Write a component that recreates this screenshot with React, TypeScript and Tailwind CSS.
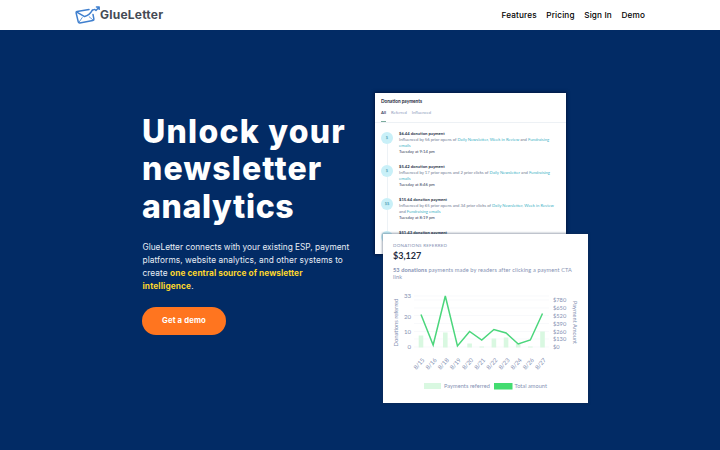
import React from "react";

const Logo = () => (
  <div className="flex items-center">
    <svg width="26" height="20" viewBox="0 0 26 20" fill="none" stroke="#3f7fce" strokeWidth="1.5" strokeLinejoin="round" strokeLinecap="round">
      <path d="M14 4.6 L2 6.5 Q0.9 6.8 1.1 7.9 L3.3 17 Q3.6 18 4.8 17.9 L17.8 15.6 Q19.1 15.3 18.9 14.2 L18 9.4" />
      <path d="M1.8 7.2 L9.6 11.6 Q14.4 10.4 17.4 5.2" />
      <path d="M4.2 17 L7.2 12.6 M17.8 14.8 L14.2 11.8" strokeWidth="0.8" />
      <path d="M17.4 5.2 L19.8 4.4 L21 5.6 L23.8 2.6 M21.4 2 L24.2 1.9 L24.2 4.4" strokeWidth="1.4" />
    </svg>
    <span className="-ml-px font-['Inter'] text-[12px] leading-[20px] font-bold tracking-[0.22px] text-[#454b55]">GlueLetter</span>
  </div>
);

const Nav = () => (
  <nav className="flex gap-[9.6px] font-['Inter'] text-[8.2px] leading-[12px] font-medium tracking-[0.14px] text-black">
    <a>Features</a>
    <a>Pricing</a>
    <a>Sign In</a>
    <a>Demo</a>
  </nav>
);

const L = ({ children }: { children: React.ReactNode }) => <span className="text-[#43b3c6]">{children}</span>;

const Payment = ({ mark, title, first, second, time }: { mark: string; title: string; first: React.ReactNode; second: React.ReactNode; time: string }) => (
  <div className="flex h-[33.1px] gap-[6px]">
    <div className="flex w-[12px] flex-col items-center">
      <div className="flex h-[12px] w-[12px] shrink-0 items-center justify-center rounded-full bg-[#c9f0f8] text-[4px] text-[#3b91ad]">{mark}</div>
      <div className="w-px flex-1 bg-[#edf2f6]" />
    </div>
    <div className="pt-px whitespace-nowrap text-[4.2px] leading-[6px] text-[#6f7b92]">
      <div className="mt-[-2px] font-bold text-[#263248]">{title}</div>
      <div>{first}</div>
      <div>{second}</div>
      <div className="text-[#35415a]">{time}</div>
    </div>
  </div>
);

const PaymentsCard = () => (
  <div className="h-[161px] w-[191px] overflow-hidden bg-white pt-[4.5px] font-['Lato'] shadow-[0_0_3px_1px_rgba(0,10,40,0.6)]">
    <div className="pl-[6px] text-[4.7px] leading-[6px] font-bold text-[#1d2940]">Donation payments</div>
    <div className="mt-[6px] flex gap-[5px] border-b border-[#edf1f5] pl-[6px] text-[4.2px] leading-[6px] text-[#8b9abb]">
      <span className="h-[12px] border-b border-[#7cab9c] font-bold text-[#35415a]">All</span>
      <span>Referred</span>
      <span>Influenced</span>
    </div>
    <div className="mt-[9px] pl-[6px]">
      <Payment mark="$" title="$6.44 donation payment" first={<>Influenced by 56 prior opens of <L>Daily Newsletter, Week in Review</L> and <L>Fundraising</L></>} second={<L>emails</L>} time="Tuesday at 9:14 pm" />
      <Payment mark="$" title="$5.42 donation payment" first={<>Influenced by 17 prior opens and 2 prior clicks of <L>Daily Newsletter</L> and <L>Fundraising</L></>} second={<L>emails</L>} time="Tuesday at 8:46 pm" />
      <Payment mark="$$" title="$15.64 donation payment" first={<>Influenced by 65 prior opens and 34 prior clicks of <L>Daily Newsletter, Week in Review</L></>} second={<>and <L>Fundraising emails</L></>} time="Tuesday at 8:19 pm" />
      <Payment mark="" title="$51.43 donation payment" first="" second="" time="" />
    </div>
  </div>
);

const days = ["8/15", "8/16", "8/18", "8/19", "8/20", "8/21", "8/22", "8/23", "8/24", "8/26", "8/27"];
const barHeights = [12, 0, 15, 0, 4, 1, 9, 10, 4, 1, 16];
const lineY = [80.5, 111, 62, 112, 97.5, 106, 95.5, 99, 110, 106, 79.5];
const dayX = (i: number) => 38 + i * 12.15;

const Chart = () => (
  <svg className="block" width="205" height="169" viewBox="0 0 205 169" fontFamily="Lato, sans-serif" fontSize="6.1" fill="#8591b3">
    {[62, 66, 74, 81.5, 89.5, 97.5, 105, 113].map((y) => (
      <line key={y} x1="31" x2="166" y1={y} y2={y} stroke="#f3f5f8" strokeWidth=".6" />
    ))}
    {barHeights.map((h, i) => (
      <rect key={i} x={dayX(i) - 2.3} y={113.5 - h} width="4.6" height={h} fill="#d9f8e1" />
    ))}
    <polyline points={lineY.map((y, i) => `${dayX(i)},${y}`).join(" ")} fill="none" stroke="#4bd67c" strokeWidth="1.5" />
    {[["33", 62], ["20", 82.5], ["10", 98], ["0", 113]].map(([t, y]) => (
      <text key={t} x="28" y={Number(y) + 2} textAnchor="end">{t}</text>
    ))}
    {["$780", "$650", "$520", "$390", "$260", "$130", "$0"].map((t, i) => (
      <text key={t} x="170" y={68.3 + i * 7.8} fontSize="5.7">{t}</text>
    ))}
    {days.map((d, i) => (
      <text key={d} transform={`translate(${dayX(i) + 4} 126.5) rotate(-47)`} textAnchor="end" fontSize="6" textLength="13">{d}</text>
    ))}
    <text transform="translate(15 112.5) rotate(-90)" fontSize="6" textLength="48">Donations referred</text>
    <text transform="translate(189.5 67) rotate(90)" fontSize="5.5" textLength="43">Payment Amount</text>
    <rect x="41" y="149" width="17" height="6" fill="#d9f8e1" />
    <text x="61" y="154.2" fontSize="5.6" textLength="46">Payments referred</text>
    <rect x="111" y="149" width="18.5" height="6.5" fill="#43dc70" />
    <text x="131.5" y="154.2" fontSize="5.6" textLength="32.5">Total amount</text>
  </svg>
);

const ReferredCard = () => (
  <div className="relative h-[169px] w-[204.5px] bg-white font-['Lato'] shadow-[0_0_2px_1px_rgba(20,40,70,0.4)]">
    <div className="absolute inset-0"><Chart /></div>
    <div className="pt-[8px] pl-[10px]">
      <div className="text-[4.5px] leading-[7px] tracking-[0.24px] text-[#8591b3]">DONATIONS REFERRED</div>
      <div className="mt-[1px] text-[9px] leading-[11px] font-bold text-[#1f2b40]">$3,127</div>
      <div className="mt-[5px] whitespace-nowrap text-[5.6px] leading-[7.4px] tracking-[0.12px] text-[#8591b3]">
        <b>53 donations</b> payments made by readers after clicking a payment CTA<br />link
      </div>
    </div>
  </div>
);

export default function App() {
  return (
    <div className="h-[450px] w-[720px] overflow-hidden bg-[#022b65]">
      <header className="flex h-[30px] items-center justify-between bg-white pr-[75px] pl-[75px]">
        <Logo />
        <Nav />
      </header>
      <main className="flex h-[420px] pl-[142px]">
        <section className="w-[233px] pt-[82.5px] whitespace-nowrap text-white">
          <h1 className="font-['Inter'] text-[32px] leading-[37.7px] font-extrabold">
            <div className="tracking-[1.25px]">Unlock your</div>
            <div className="tracking-[1.15px]">newsletter</div>
            <div className="tracking-[0.65px]">analytics</div>
          </h1>
          <div className="mt-[15.5px] pl-[0.5px] font-['Inter'] text-[8.3px] leading-[12.8px] text-[#e8edf5]">
            <div>GlueLetter connects with your existing ESP, payment</div>
            <div className="tracking-[0.08px]">platforms, website analytics, and other systems to</div>
            <div className="tracking-[0.06px]">create <b className="text-[#fbd52d]">one central source of newsletter</b></div>
            <div className="tracking-[0.12px]"><b className="text-[#fbd52d]">intelligence</b>.</div>
          </div>
          <button className="mt-[14.5px] h-[28px] w-[84px] rounded-full bg-[#ff751f] font-['Inter'] text-[7.7px] font-bold tracking-[0.15px] text-white">Get a demo</button>
        </section>
        <section className="relative pt-[63px]">
          <PaymentsCard />
          <div className="absolute top-[204px] left-[8px]"><ReferredCard /></div>
        </section>
      </main>
    </div>
  );
}
